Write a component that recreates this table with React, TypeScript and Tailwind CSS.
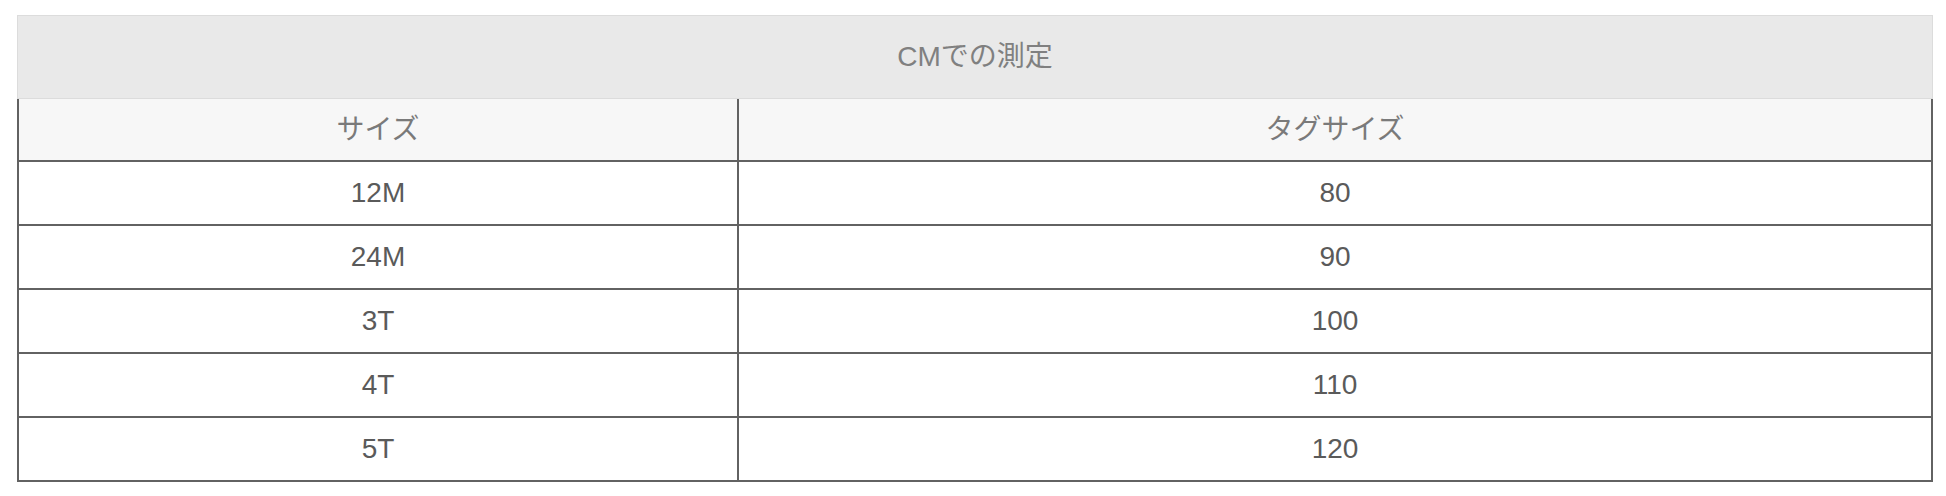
const rows: [string, string][] = [
  ['12M', '80'],
  ['24M', '90'],
  ['3T', '100'],
  ['4T', '110'],
  ['5T', '120'],
];

export default function App() {
  return (
    <div className="min-h-screen bg-white pt-[15px] pl-[17px] font-['Liberation_Sans','Noto_Sans_CJK_JP',sans-serif]">
      <div className="w-[1916px]">
        <div className="h-[84px] bg-[#e9e9e9] border border-[#dcdcdc] flex items-center justify-center text-[28px] text-[#808080]">
          CMでの測定
        </div>
        <div className="border-x-2 border-b-2 border-[#626262]">
          <div className="grid grid-cols-[720px_1fr] h-[63px] bg-[#f7f7f7] border-b-2 border-[#626262] text-[28px] text-[#7a7a7a]">
            <div className="flex items-center justify-center border-r-2 border-[#626262]">サイズ</div>
            <div className="flex items-center justify-center">タグサイズ</div>
          </div>
          {rows.map(([size, tag], i) => (
            <div
              key={size}
              className={
                i < rows.length - 1
                  ? 'grid grid-cols-[720px_1fr] h-[64px] border-b-2 border-[#626262] text-[28px] text-[#5a5a5a]'
                  : 'grid grid-cols-[720px_1fr] h-[62px] text-[28px] text-[#5a5a5a]'
              }
            >
              <div className="flex items-center justify-center border-r-2 border-[#626262]">{size}</div>
              <div className="flex items-center justify-center">{tag}</div>
            </div>
          ))}
        </div>
      </div>
    </div>
  );
}
